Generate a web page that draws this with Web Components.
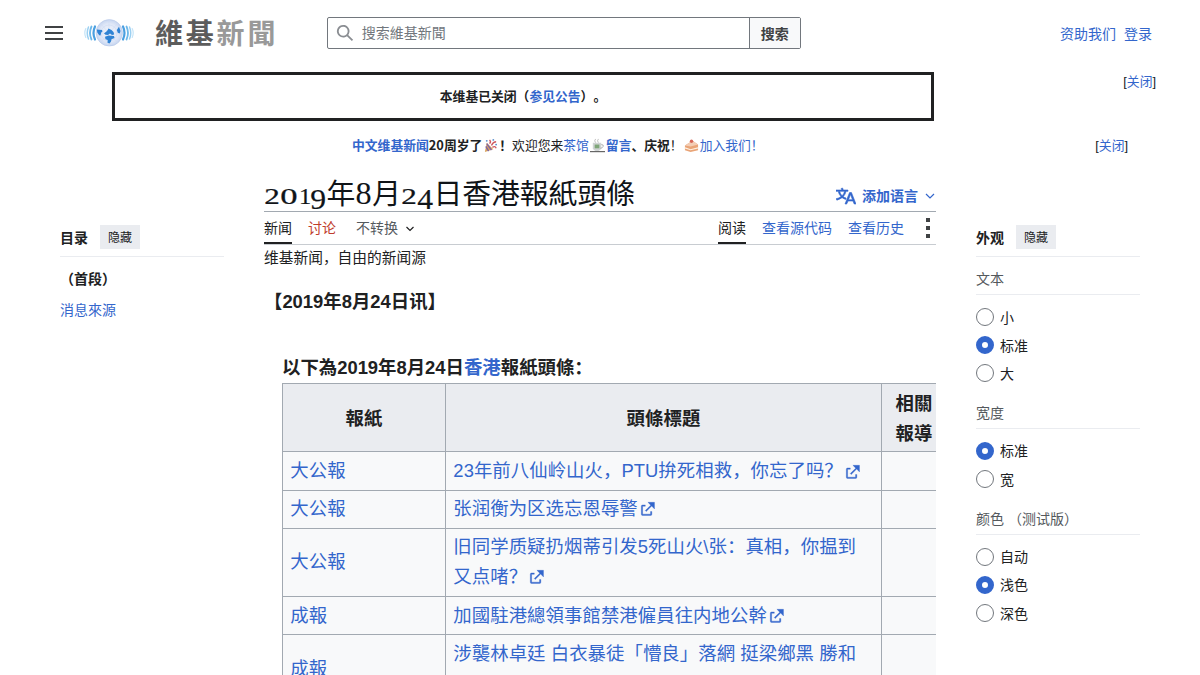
<!DOCTYPE html>
<html lang="zh-Hans">
<head>
<meta charset="utf-8">
<title>2019年8月24日香港報紙頭條</title>
<style>
html,body{margin:0;background:#fff}
body{height:675px;overflow:hidden;color:#202122;font:14px/22px "Liberation Sans","Noto Sans CJK SC",sans-serif;text-spacing-trim:space-all}
</style>
</head>
<body>
<wn-page></wn-page>
<script>
const define=(name,html,init)=>{
  const t=document.createElement('template');t.innerHTML=html;
  customElements.define(name,class extends HTMLElement{
    connectedCallback(){
      if(this.shadowRoot)return;
      this.attachShadow({mode:'open'}).append(t.content.cloneNode(true));
      if(init)init.call(this,this.shadowRoot);
    }
  });
};

define('wn-link',`<style>:host{display:inline;color:#36c;cursor:pointer}:host([new]){color:#bf3c2c}</style><slot></slot>`);

define('wn-ext',`<style>:host{display:inline;color:#36c}svg{width:15.8px;height:15.8px;vertical-align:-2.500px;margin-left:2px}</style><slot></slot><svg viewBox="0 0 12 12"><path fill="#36c" stroke="#36c" stroke-width=".25" d="M6 1h5v5L8.86 3.85 4.7 8 4 7.3l4.15-4.16zM2 3h2v1H2v6h6V8h1v2a1 1 0 0 1-1 1H2a1 1 0 0 1-1-1V4a1 1 0 0 1 1-1"/></svg>`);

define('wn-logo',`<style>
:host{display:flex;align-items:center}
svg{width:50px;height:32px;display:block}
.w{margin:-2px 0 0 21px;font:700 28px/32px "Noto Sans CJK TC",sans-serif;letter-spacing:2.8px;color:#5c5c5c;white-space:nowrap}
.w span{color:#999}
</style>
<svg viewBox="0 0 50 32"><defs><radialGradient id="g"><stop offset="0" stop-color="#f1f5fc"/><stop offset=".7" stop-color="#dfe7f7"/><stop offset="1" stop-color="#c6d5f0"/></radialGradient></defs>
<g fill="none" stroke-linecap="round"><path d="M11 9.500q-3 6.500 0 13M39 9.500q3 6.500 0 13" stroke="#4a9fe0" stroke-width="2.200"/><path d="M7.500 9.500q-3 6.500 0 13M42.500 9.500q3 6.500 0 13" stroke="#6db8ea" stroke-width="1.800"/><path d="M4.500 10q-2.500 6 0 12M45.500 10q2.500 6 0 12" stroke="#9bd0f2" stroke-width="1.500"/><path d="M1.800 11.500q-2 4.500 0 9M48.200 11.500q2 4.500 0 9" stroke="#c5e4f8" stroke-width="1.200"/></g>
<circle cx="25.300" cy="15.800" r="13.200" fill="url(#g)" stroke="#bccbe9" stroke-width=".7"/>
<g fill="none" stroke="#cdd9f0" stroke-width=".5"><path d="M12 16h26M25 3v26M16 6l18 20M34 6 16 26"/><circle cx="25" cy="16" r="8"/></g>
<g fill="#2f83d4"><path d="m12.800 12.500 5.200.5.500 1.500-1.300 1-.7 3-1.300-.3-1.900-2.700z"/><path d="m20 16.500 3-2.500 1.500-2.500 3 1.500 2 2 .7 2.500-2.200.5-2-1.500-2 1.500-2.500-.3z"/><path d="m32.800 13 2.200-3.200 1.500 4.200-.8 2.500-1.900-.7z"/><path d="m21 19.800 3.500-1.300 5.500.5.500 2-3 1.200-.5 2.300-1.500 2-2-.7.200-2.800-2.200-.8z"/></g></svg>
<div class="w">維基<span>新聞</span></div>`);

define('wn-header',`<style>
:host{display:flex;align-items:center;height:66px;padding:0 48px 0 45px;box-sizing:border-box}
.menu{width:18px;height:14px;margin-right:21px;display:flex;flex-direction:column;justify-content:space-between}
.menu i{height:2px;background:#404244}
.search{display:flex;width:474px;height:32px;margin-left:48.500px;box-sizing:border-box;border:1px solid #72777d;border-radius:2px;line-height:30px}
.in{flex:1;display:flex;align-items:center;padding-left:8px;color:#72777d}
.in svg{width:18px;height:18px;margin-right:8px}
.btn{width:50px;border-left:1px solid #72777d;background:#f8f9fa;text-align:center;font-weight:700;color:#404244;line-height:33px}
nav{margin-left:auto;display:flex;gap:8px;padding-top:1px}
</style>
<div class="menu"><i></i><i></i><i></i></div><wn-logo></wn-logo>
<div class="search"><div class="in"><svg viewBox="0 0 20 20"><path fill="#8a8d92" d="M12.200 13.600a7 7 0 1 1 1.400-1.400l5.400 5.400-1.400 1.400zM3 8a5 5 0 1 0 10 0A5 5 0 0 0 3 8"/></svg><span>搜索維基新聞</span></div><div class="btn">搜索</div></div>
<nav><wn-link>资助我们</wn-link><wn-link>登录</wn-link></nav>`);

define('wn-notices',`<style>
:host{display:block;height:110px;font:12.8px/20px "Noto Sans CJK SC",sans-serif}
.row{display:flex;justify-content:space-between}
.one{padding:6px 44px 0 112px}
.box{width:822px;height:49px;box-sizing:border-box;border:3px solid #202122;text-align:center;font-weight:700;line-height:42px}
.close{font:12.8px/19px "Liberation Sans","Noto Sans CJK SC",sans-serif;white-space:nowrap}
.two{padding:14px 72px 0 352px;white-space:nowrap;align-items:center}
svg{width:15px;height:15px;vertical-align:-3px;margin:0 1px}
</style>
<div class="row one"><div class="box">本维基已关闭（<wn-link>参见公告</wn-link>）。</div><div class="close">[<wn-link>关闭</wn-link>]</div></div>
<div class="row two"><div><b><wn-link>中文维基新闻</wn-link>20周岁了</b><svg viewBox="0 0 16 16"><path d="m4 5 7 7-9 3z" fill="#d9a35c"/><path d="m4 6 5 7M3 9l3 5" stroke="#7d64a8" stroke-width="1.500"/><path d="M7 6q2-2 0-4M9 8q2-4 5-4M10 10q3-2 4 1" stroke="#cf5b60" fill="none" stroke-width="1.500"/><g fill="#5d91cd"><circle cx="11" cy="2" r="1"/><circle cx="14" cy="7" r="1"/><circle cx="4" cy="3" r="1"/></g></svg><b>！</b>欢迎您来<wn-link>茶馆<svg viewBox="0 0 16 16"><path d="M6 5q-2-2 0-4M9 5q-2-2 0-4" fill="none" stroke="#bbb"/><path d="M3 5h9v6q-1 3-4.500 3T3 11z" fill="#cfd3d3"/><path d="M12 7q3 0 2 2t-3 2" fill="none" stroke="#aaa"/><path d="M5 7h5v4H5z" fill="#7fa678"/><path d="M0 14.500h16" stroke="#666" stroke-width="1.300"/></svg><b>留言</b></wn-link><b>、庆祝</b>！<svg viewBox="0 0 16 16"><path d="m1 8 8-5 6 4v6l-8 2-6-2z" fill="#e9a477"/><path d="m1 8 8-5 6 4-8 2z" fill="#f3cdb4"/><path d="m1 10.500 6 2 8-2" fill="none" stroke="#fff0df" stroke-width="1.200"/><circle cx="8" cy="3.500" r="1.800" fill="#d66556"/></svg><wn-link>加入我们！</wn-link></div><div class="close">[<wn-link>关闭</wn-link>]</div></div>`);

define('wn-panel-head',`<style>
:host{display:flex;align-items:center;height:40px;border-bottom:1px solid #eaecf0;box-sizing:border-box;padding-top:1px}
b{width:40px;padding-top:1px}.h{width:40px;height:24px;background:#eaecf0;text-align:center;font-size:12px;line-height:26px}
</style><b><slot></slot></b><span class="h">隐藏</span>`);

define('wn-toc',`<style>
:host{display:block;width:164px;padding-top:41px}
.i{line-height:22px}.a{font-weight:700;margin-top:11px}.b{margin-top:9px}
</style><wn-panel-head>目录</wn-panel-head><div class="i a">（首段）</div><div class="i b"><wn-link>消息來源</wn-link></div>`);

define('wn-radio',`<style>
:host{display:flex;align-items:center;height:28.200px}
i{width:18px;height:18px;box-sizing:border-box;border:1px solid #72777d;border-radius:50%;margin-right:6px}
:host([checked]) i{border:6px solid #36c}
span{padding-top:1px}
</style><i></i><span><slot></slot></span>`);

define('wn-group',`<style>
:host{display:block}.t{color:#54595d;height:38px;box-sizing:border-box;border-bottom:1px solid #eaecf0;padding-top:11px;line-height:22px}
.o{padding:8px 0 3px}
</style><div class="t"></div><div class="o"><slot></slot></div>`,function(r){r.querySelector('.t').textContent=this.getAttribute('label')});

define('wn-appearance',`<style>:host{display:block;width:164px;padding-top:41px}wn-group+wn-group{margin-top:.3px}</style>
<wn-panel-head>外观</wn-panel-head>
<wn-group label="文本"><wn-radio>小</wn-radio><wn-radio checked>标准</wn-radio><wn-radio>大</wn-radio></wn-group>
<wn-group label="宽度"><wn-radio checked>标准</wn-radio><wn-radio>宽</wn-radio></wn-group>
<wn-group label="颜色 （测试版）"><wn-radio>自动</wn-radio><wn-radio checked>浅色</wn-radio><wn-radio>深色</wn-radio></wn-group>`);

define('wn-title',`<style>
:host{display:flex;height:36px;box-sizing:border-box;border-bottom:1px solid #a2a9b1;align-items:center}
h1{margin:1px 0 0;font:400 28.8px/34px "Liberation Serif","Noto Sans CJK TC",serif;color:#101418;white-space:nowrap;flex:1}
h1 span{display:inline-block;text-align:center;line-height:34px;transform-origin:50% 27px}
.x{transform:scale(1.080,.8);-webkit-text-stroke:.3px #101418}.o{transform:scale(1.200,.8)}.n{transform:scale(.85,.8)}.d{transform:translateY(4.500px) scale(1.100,1.020);-webkit-text-stroke:.2px #101418}.u{transform:scale(1.120,1.100)}
.lang{display:flex;align-items:center;color:#36c;font-weight:700;margin-top:5px}
.l{width:20px;height:20px;margin-right:6px}.c{width:10px;height:10px;margin:0 1px 0 7px}
</style>
<h1><span class="x" style="width:16px">2</span><span class="x o" style="width:17.700px">0</span><span class="x n" style="width:12.300px">1</span><span class="d" style="width:16.500px">9</span>年<span class="u" style="width:17px">8</span>月<span class="x" style="width:16px">2</span><span class="d" style="width:16.300px">4</span>日香港報紙頭條</h1>
<div class="lang"><svg class="l" viewBox="0 0 20 20"><path fill="#36c" stroke="#36c" stroke-width=".6" d="M20 18h-1.440a.6.6 0 0 1-.4-.12.8.8 0 0 1-.23-.31L17 15h-5l-1 2.540a.8.8 0 0 1-.22.3.6.6 0 0 1-.4.14H9l4.550-11.470h1.890zm-3.530-4.310L14.890 9.500a12 12 0 0 1-.39-1.240q-.09.37-.19.69l-.19.56-1.580 4.190zm-6.300-1.580a13.400 13.400 0 0 1-2.910-1.410 11.460 11.460 0 0 0 2.810-5.370H12V4H7.310a4 4 0 0 0-.2-.56C6.870 2.790 6.600 2 6.600 2l-1.470.5s.4.89.6 1.500H0v1.330h2.150A11.230 11.230 0 0 0 5 10.700a17.200 17.200 0 0 1-5 2.100q.56.82.87 1.380a23.300 23.300 0 0 0 5.220-2.510 15.600 15.600 0 0 0 3.560 1.770zM3.630 5.330h4.910a8.100 8.100 0 0 1-2.450 4.450 9.100 9.100 0 0 1-2.460-4.450"/></svg><span>添加语言</span><svg class="c" viewBox="0 0 10 10"><path d="m1 3 4 4 4-4" fill="none" stroke="#36c" stroke-width="1.200"/></svg></div>`);

define('wn-tabs',`<style>
:host{display:flex;height:33px;box-sizing:border-box;border-bottom:1px solid #c8ccd1;gap:16px;line-height:33px}
.on{border-bottom:2px solid #202122;height:30px}
.v{color:#54595d;margin-left:4px}
.v svg{width:10px;height:10px;margin-left:7px;vertical-align:-1px}
.sp{flex:1}
.m{width:20px;margin:6px -2px 0;display:flex;flex-direction:column;align-items:center;gap:4px}
.m i{width:4px;height:4px;background:#404244}
</style><span class="on">新闻</span><wn-link new>讨论</wn-link><span class="v">不转换<svg viewBox="0 0 10 10"><path d="m1.500 3 3.500 3.500L8.500 3" fill="none" stroke="#202122" stroke-width="1.200"/></svg></span><span class="sp"></span><span class="on">阅读</span><wn-link>查看源代码</wn-link><wn-link>查看历史</wn-link><span class="m"><i></i><i></i><i></i></span>`);

define('wn-table',`<style>
:host{display:block}
table{border-collapse:collapse;table-layout:fixed;width:664px;background:#f8f9fa;font-size:18.400px;line-height:30px;letter-spacing:.05px}
td,th{border:1px solid #a2a9b1;padding:3px 7.360px}
th{background:#eaecf0;text-align:center;padding-top:4px;padding-bottom:2px}
tr.s{height:38px}tr.f{height:39px}tr.d{height:68px}
td{padding-top:2px;padding-bottom:4px}
tr.f td{padding-top:3px;padding-bottom:3px}
tr.k td{padding-top:3px;padding-bottom:3px}
</style><table><colgroup><col style="width:163px"><col style="width:436px"><col style="width:65px"></colgroup>
<tr class="d"><th>報紙</th><th>頭條標題</th><th>相關<br>報導</th></tr>
<tr class="f"><td><wn-link>大公報</wn-link></td><td><wn-ext>23年前八仙岭山火，PTU拚死相救，你忘了吗？</wn-ext></td><td></td></tr>
<tr class="s"><td><wn-link>大公報</wn-link></td><td><wn-ext>张润衡为区选忘恩辱警</wn-ext></td><td></td></tr>
<tr class="d"><td><wn-link>大公報</wn-link></td><td><wn-ext>旧同学质疑扔烟蒂引发5死山火\\张：真相，你揾到<br>又点啫？</wn-ext></td><td></td></tr>
<tr class="s k"><td><wn-link>成報</wn-link></td><td><wn-ext>加國駐港總領事館禁港僱員往内地公幹</wn-ext></td><td></td></tr>
<tr class="d k"><td><wn-link>成報</wn-link></td><td><wn-link>涉襲林卓廷 白衣暴徒「懵良」落網 挺梁鄉黑 勝和</wn-link><br>&nbsp;</td><td></td></tr>
</table>`);

define('wn-article',`<style>
:host{display:block;width:672px;overflow:hidden}
.sub{font-size:14.720px;line-height:24px;height:24px;padding-top:1px}
.date{font-size:18.400px;line-height:30px;font-weight:700;margin-top:17px}
.list{margin:36px 0 0 18px}
.cap{font-size:18.400px;line-height:30px;font-weight:700}
</style><wn-title></wn-title><wn-tabs></wn-tabs><div class="sub">维基新闻，自由的新闻源</div><div class="date">【2019年8月24日讯】</div>
<div class="list"><div class="cap">以下為2019年8月24日<wn-link>香港</wn-link>報紙頭條：</div><wn-table></wn-table></div>`);

define('wn-page',`<style>
:host{display:block;height:675px;overflow:hidden}
main{display:grid;grid-template-columns:164px 672px 164px;column-gap:40px;padding-left:60px;align-items:start}
</style><wn-header></wn-header><wn-notices></wn-notices><main><wn-toc></wn-toc><wn-article></wn-article><wn-appearance></wn-appearance></main>`);
</script>
</body>
</html>
